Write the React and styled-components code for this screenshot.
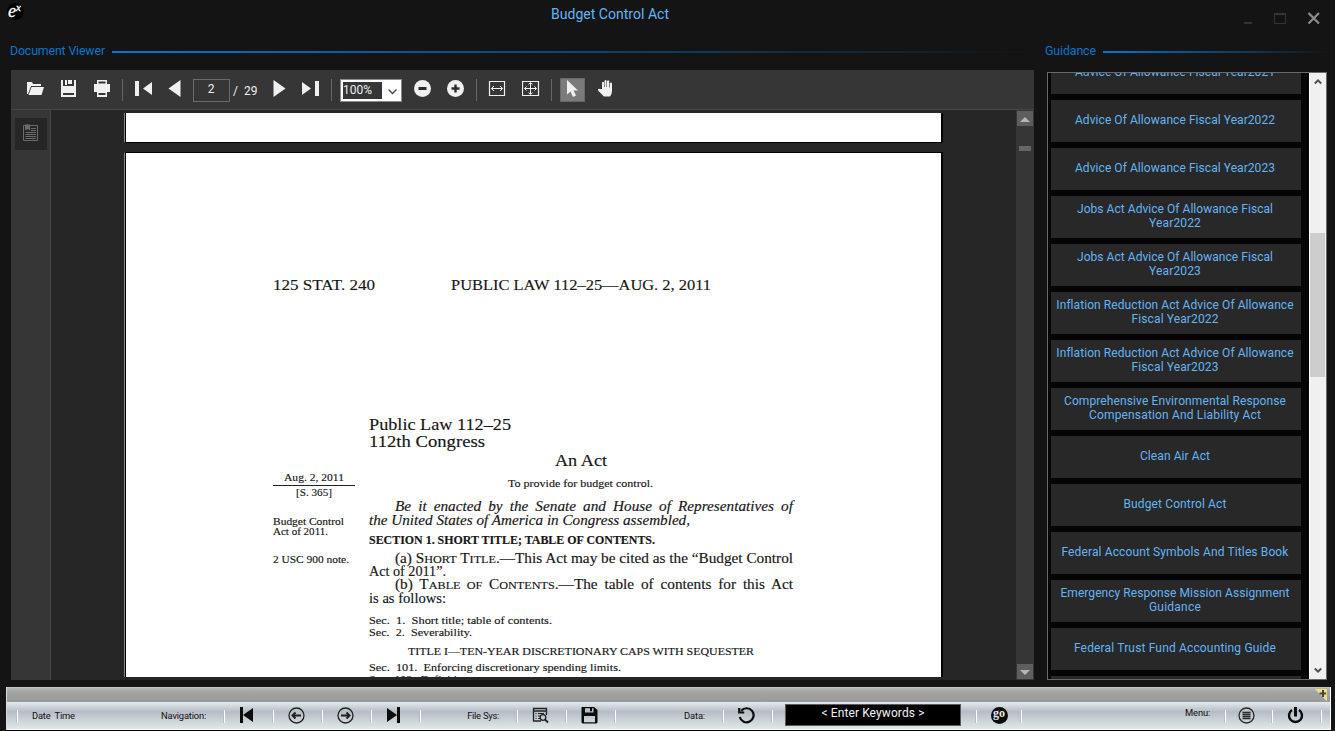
import React, { useLayoutEffect, useRef } from 'react';
import styled, { createGlobalStyle } from 'styled-components';

const Global = createGlobalStyle`
  * { box-sizing: border-box; }
  body { margin: 0; background: #141414; overflow: hidden; font-family: Roboto, sans-serif; }
`;

const ui = 'Roboto, sans-serif';
const book = '"Century Schoolbook", C059, "Liberation Serif", serif';

const Window = styled.div`
  width: 1335px; height: 731px; background: #141414; overflow: hidden;
  display: flex; flex-direction: column; font-family: ${ui};
`;
const TitleBar = styled.header`
  height: 40px; display: flex; align-items: flex-start; padding: 3px 14px 0 7px;
`;
const Logo = styled.div`
  width: 17px; height: 17px; border-radius: 50%; background: #000; color: #fff;
  font: italic 18px/17px "Liberation Serif", serif; padding-left: 1px; display: flex;
  -webkit-text-stroke: 0.3px #fff;
  & > sup { font-size: 11px; line-height: 8px; }
`;
const Title = styled.h1`
  margin: 0 0 0 527px; font-size: 14px; font-weight: 400; line-height: 22px; color: #64b4f4;
`;
const WindowButtons = styled.div`
  margin-left: auto; display: flex; padding-top: 8px; gap: 21px;
`;
const Headings = styled.div`
  display: grid; grid-template-columns: 1035px 1fr; height: 22px; padding-left: 10px;
`;
const Heading = styled.h2`
  margin: 0; display: flex; align-items: center; gap: 7px; font-size: 12.4px; font-weight: 400; color: #0a76cf;
  & > span { margin-bottom: 1px; }
  &::after { content: ''; flex: 1; height: 2px; margin-top: 2px; margin-right: ${p => p.$end}px;
    background: linear-gradient(90deg, #0078d7, #141414); }
`;
const Main = styled.main`
  display: flex; height: 610px; margin-top: 8px; padding-left: 11px;
`;
const Viewer = styled.section`
  width: 1023px; height: 610px; display: flex; flex-direction: column; background: #262626;
`;
const Toolbar = styled.div`
  height: 40px; background: #363636; border-bottom: 1px solid #474747; display: flex; align-items: center;
`;
const Tool = styled.span`
  display: flex; margin-left: ${p => p.$ml}px; margin-bottom: 3px;
`;
const Divider = styled.i`
  width: 1px; height: 22px; margin-left: ${p => p.$ml}px; background: #666;
`;
const PageBox = styled.div`
  width: 37px; height: 23px; margin: 2px 0 0 9px; border: 1px solid #6a6a6a; color: #eee;
  font-size: 12px; line-height: 18px; text-align: center; padding-right: 1px;
`;
const PageTotal = styled.span`
  width: 25px; margin: 2px 0 0 3px; color: #eee; font-size: 12px; display: flex; gap: 6px;
`;
const Zoom = styled.div`
  width: 62px; height: 23px; margin: 2px 0 0 8px; border: 1px solid #8a8a8a; background: #fff; padding: 2px;
  display: flex; align-items: center; justify-content: space-between;
  & > b { width: 39px; height: 17px; background: #363636; color: #eee; font-weight: 400; font-size: 12px; line-height: 16px; }
  & > svg { margin: 2px 2px 0 0; }
`;
const PointerTool = styled.div`
  width: 25px; height: 24px; margin-left: 8px; background: #7b7b7b; border: 1px solid #686868; padding: 1px 0 0 5px;
`;
const ViewerBody = styled.div`
  flex: 1; display: flex; min-height: 0;
`;
const SideStrip = styled.aside`
  width: 40px; background: #363636; border-right: 1px solid #474747; padding: 8px 0 0 4px;
`;
const BookmarkButton = styled.div`
  width: 32px; height: 32px; background: #262626; padding: 6px 0 0 8px;
`;
const Canvas = styled.div`
  flex: 1; padding: 3px 0 3px 73px; display: flex; flex-direction: column; gap: 9px;
`;
const Sheet = styled.article`
  width: 819px; background: #fff; color: #161616; overflow: hidden;
  border-left: 1px solid #888; border-right: 2px solid #000;
  box-shadow: inset 1px 0 #000; padding-left: 148px;
  ${p => p.$tail
    ? 'height: 30px; border-bottom: 1px solid #000;'
    : 'height: 525px; border-top: 1px solid #000;'}
`;
const DocScroll = styled.div`
  width: 18px; background: #363636; padding: 1px; display: flex; flex-direction: column; align-items: center;
`;
const ScrollArrow = styled.div`
  width: 16px; height: 15px; background: #5e5e5e; display: grid; place-items: center;
`;
const DocThumb = styled.div`
  width: 12px; height: 5px; margin: 20px 0 auto; background: #666;
`;
const Columns = styled.div`
  display: grid; grid-template-columns: 96px 424px; font-family: ${book};
`;
const Column = styled.div` min-width: 0; `;
const Line = styled.div`
  height: ${p => p.$step}px; padding-left: ${p => p.$indent || 0}px; display: flex; align-items: flex-end;
  font-size: ${p => p.$size}px; font-family: ${book};
  font-style: ${p => (p.$italic ? 'italic' : 'normal')}; font-weight: ${p => (p.$bold ? 700 : 400)};
`;
const STRETCH = 1.09;
const LineText = styled.span`
  white-space: ${p => (p.$justify ? 'normal' : 'pre')}; line-height: 1; margin-bottom: -0.1625em; flex: none;
  height: 1em; -webkit-text-stroke: 0.15px #161616; transform-origin: 0 0;
  ${p => p.$justify && `width: ${p.$justify / STRETCH}px; text-align-last: justify; transform: scaleX(${STRETCH});`}
`;
const Caps = styled.span` font-size: 0.8em; `;
const Rule = styled.hr` width: 82px; height: 1px; border: 0; margin: 4px 0 0; background: #222; `;

const Guidance = styled.section`
  width: 280px; height: 608px; margin: 2px 0 0 13px; border: 1px solid #696969; background: #050505;
  display: flex; overflow: hidden;
`;
const List = styled.div`
  width: 261px; padding-left: 3px; display: flex; flex-direction: column; gap: 6px; margin-top: -21px;
`;
const Entry = styled.div`
  width: 250px; height: 42px; flex: none; background: #282828; color: #64b4f4; font-size: 12px; line-height: 14px;
  display: flex; flex-direction: column; align-items: center; justify-content: center; padding: 0 2px 2px 0;
  white-space: nowrap;
`;
const ListScroll = styled.div`
  width: 17px; height: 606px; background: #f0f0f0; border-left: 1px solid #fff; display: flex; flex-direction: column;
  align-items: center; padding: 5px 1px 5px 0;
`;
const ListThumb = styled.div` width: 15px; height: 144px; background: #cdcdcd; margin: 147px 0 auto; `;

const Footer = styled.footer`
  width: 1325px; height: 43px; margin: 7px 0 0 6px; border-left: 1px solid #d7dcdf; border-right: 1px solid #fff;
  display: flex; flex-direction: column; box-shadow: 0 1px #000;
`;
const Grip = styled.div`
  height: 15px; background: linear-gradient(#b4b6b5, #a2a4a2 30%, #999b99); border-top: 1px solid #c2c5c5;
  display: flex; justify-content: flex-end; padding-right: 2px;
`;
const Strip = styled.div`
  height: 28px; display: flex; border-bottom: 1px solid #fff;
  background: linear-gradient(#e2ebed 0%, #b5bcc6 36%, #c5ccd2 58%, #e0e8e9 100%);
`;
const Cell = styled.div`
  width: ${p => p.$w}px; display: flex; align-items: center; justify-content: ${p => p.$just || 'center'};
  padding: 0 ${p => p.$pr ?? 5}px 1px ${p => p.$pl || 0}px; flex: none; color: #111; font-size: 9.4px;
  background: linear-gradient(#bdbcbb, #bdbcbb) right 1px top 8px / 1px 13px no-repeat,
    linear-gradient(#fff, #fff) right 0 top 8px / 1px 13px no-repeat;
`;
const Keywords = styled.div`
  width: 176px; height: 22px; margin-bottom: 1px; border: 1px solid #5a5a5a; background: #000; color: #f2f2f2;
  font-size: 12px; line-height: 17px; text-align: center;
`;
const Go = styled.div`
  width: 17px; height: 17px; border-radius: 50%; background: #0b0b0b; color: #e8e8e8;
  font: bold 12px/12px "Liberation Serif", serif; text-align: center;
`;
const Label = styled.span` white-space: pre; margin: 0 0 ${p => p.$lift || 0}px; `;

/* Tracks its text so that it takes exactly `w` pixels; with `stretch` the glyphs widen instead. */
function Fit({ w, stretch, children, as: Tag = 'span', ...rest }) {
  const ref = useRef(null);
  useLayoutEffect(() => {
    const el = ref.current;
    el.style.letterSpacing = '0px';
    if (stretch) el.style.transform = 'none';
    const natural = el.getBoundingClientRect().width;
    if (stretch) el.style.transform = `scaleX(${w / natural})`;
    else el.style.letterSpacing = `${(w - natural) / (el.textContent.length - 0.5)}px`;
  }, [w, stretch]);
  return <Tag ref={ref} {...rest}>{children}</Tag>;
}
function Text({ w, step, size, indent, italic, bold, justify, children }) {
  return (
    <Line $step={step} $size={size} $indent={indent} $italic={italic} $bold={bold}>
      {justify ? <LineText $justify={w}>{children}</LineText> : <Fit as={LineText} w={w} stretch>{children}</Fit>}
    </Line>
  );
}
function Icon({ s = 18, vb = 18, fill = '#f0f0f0', ...p }) {
  return <svg width={s} height={s} viewBox={`0 0 ${vb} ${vb}`} fill={fill} {...p} />;
}

const entries = [
  [['Advice Of Allowance Fiscal Year2021', 200]],
  [['Advice Of Allowance Fiscal Year2022', 200]],
  [['Advice Of Allowance Fiscal Year2023', 200]],
  [['Jobs Act Advice Of Allowance Fiscal', 196], ['Year2022', 52]],
  [['Jobs Act Advice Of Allowance Fiscal', 196], ['Year2023', 52]],
  [['Inflation Reduction Act Advice Of Allowance', 237], ['Fiscal Year2022', 87]],
  [['Inflation Reduction Act Advice Of Allowance', 237], ['Fiscal Year2023', 87]],
  [['Comprehensive Environmental Response', 222], ['Compensation And Liability Act', 172]],
  [['Clean Air Act', 70]],
  [['Budget Control Act', 103]],
  [['Federal Account Symbols And Titles Book', 227]],
  [['Emergency Response Mission Assignment', 229], ['Guidance', 52]],
  [['Federal Trust Fund Accounting Guide', 202]],
  [['', 0]],
];

const Tools = () => (
  <Toolbar>
    <Tool $ml={15}><Icon><path d="M1 15V3h5l1 2h8v2H5L2 15ZM5.500 8H18l-2.500 8H2.500Z" /></Icon></Tool>
    <Tool $ml={16}><Icon><path fillRule="evenodd" d="M1 1h2v8h11V1h2v17H1ZM3 14v2h11v-2Z" /><path d="M5 1h2v5H5ZM8 1h4v4H8ZM3 7h11v3H3Z" /></Icon></Tool>
    <Tool $ml={15}><Icon><path fillRule="evenodd" d="M4 1h10v4h3v8h-3v5H4v-5H1V5h3ZM5.500 2.500v2h7v-2ZM5.500 14v2h7v-2Z" /></Icon></Tool>
    <Divider $ml={11} />
    <Tool $ml={12}><Icon><path d="M0 2h4v15H0ZM17 3v13L8 9.500Z" /></Icon></Tool>
    <Tool $ml={13}><Icon><path d="M14.500 1v17L2.500 9.500Z" /></Icon></Tool>
    <PageBox>2</PageBox>
    <PageTotal><span>/</span><span>29</span></PageTotal>
    <Tool $ml={12}><Icon><path d="M3.500 1v17l12-8.500Z" /></Icon></Tool>
    <Tool $ml={14}><Icon><path d="M0 3v13l9-6.500ZM13 2h4v15h-4Z" /></Icon></Tool>
    <Divider $ml={11} />
    <Zoom><b>100%</b><Icon s={9} vb={9} fill="none" stroke="#444" strokeWidth="1.300"><path d="m.5 2.500 4 4 4-4" /></Icon></Zoom>
    <Tool $ml={12}><Icon><circle cx="8.500" cy="9.500" r="8.500" /><path d="M4.500 8h8v3h-8Z" fill="#2a2a2a" /></Icon></Tool>
    <Tool $ml={15}><Icon><circle cx="8.500" cy="9.500" r="8.500" /><path d="M4.500 8.300h2.800V5.500h2.400v2.800h2.800v2.400H9.700v2.800H7.300v-2.800H4.500Z" fill="#2a2a2a" /></Icon></Tool>
    <Divider $ml={11} />
    <Tool $ml={11}><Icon fill="none" stroke="#f0f0f0"><path strokeWidth="1.200" d="M1.500 2.500h15v14h-15Z" /><path d="M3.500 9.500h11M6 7 3.500 9.500 6 12M12 7l2.500 2.500L12 12" /></Icon></Tool>
    <Tool $ml={16}><Icon fill="none" stroke="#f0f0f0"><path strokeWidth="1.200" d="M.5 2.500h16v14H.5Z" /><path d="M2.500 9.500h12M8.500 4v11M4.500 7.500l-2 2 2 2M12.500 7.500l2 2-2 2M6.500 5.500l2-2 2 2M6.500 13.500l2 2 2-2" /></Icon></Tool>
    <Divider $ml={11} />
    <PointerTool><Icon><path d="M1 0v14.500l3.500-3 2.500 5.500 3-1.500-2.500-5H12Z" /></Icon></PointerTool>
    <Tool $ml={12}><Icon><path d="M5 10V3.500q1-1.300 2 0V8h.5V1.800q1-1.500 2 0V8h.5V2q1.200-1.300 2.200 0v6.500h.6V4q1.200-1.200 2.200.2V12q0 3-2 5.500H7Q5 15.500.8 11.200q0-2 2.200-1.200Z" /></Icon></Tool>
  </Toolbar>
);

const Act = () => (
  <Sheet>
    <Columns>
      <Column>
        <Text step={137} size={15.5} w={102}>125 STAT. 240</Text>
        <Text step={191} size={11} indent={11} w={60}>Aug. 2, 2011</Text>
        <Rule />
        <Text step={10} size={11} indent={23} w={36}>[S. 365]</Text>
        <Text step={29} size={11} w={71}>Budget Control</Text>
        <Text step={10} size={11} w={55}>Act of 2011.</Text>
        <Text step={28} size={11} w={76}>2 USC 900 note.</Text>
      </Column>
      <Column>
        <Text step={137} size={15.5} indent={82} w={260}>PUBLIC LAW 112–25—AUG. 2, 2011</Text>
        <Text step={140} size={17} w={142}>Public Law 112–25</Text>
        <Text step={17} size={17} w={116}>112th Congress</Text>
        <Text step={19} size={17} indent={186} w={52}>An Act</Text>
        <Text step={21} size={11} indent={139} w={145}>To provide for budget control.</Text>
        <Text step={25} size={14} indent={26} w={398} italic justify>Be it enacted by the Senate and House of Representatives of</Text>
        <Text step={14} size={14} w={321} italic>the United States of America in Congress assembled,</Text>
        <Text step={19} size={11.5} w={286} bold>SECTION 1. SHORT TITLE; TABLE OF CONTENTS.</Text>
        <Text step={19} size={14} indent={26} w={398}>(a) S<Caps>HORT</Caps> T<Caps>ITLE</Caps>.—This Act may be cited as the “Budget Control</Text>
        <Text step={13} size={14} w={77}>Act of 2011”.</Text>
        <Text step={13} size={14} indent={26} w={398} justify>(b) T<Caps>ABLE OF</Caps> C<Caps>ONTENTS</Caps>.—The table of contents for this Act</Text>
        <Text step={14} size={14} w={77}>is as follows:</Text>
        <Text step={20} size={11} w={183}>Sec.  1.  Short title; table of contents.</Text>
        <Text step={12} size={11} w={103}>Sec.  2.  Severability.</Text>
        <Text step={19} size={11} indent={39} w={346}>TITLE I—TEN-YEAR DISCRETIONARY CAPS WITH SEQUESTER</Text>
        <Text step={16} size={11} w={252}>Sec.  101.  Enforcing discretionary spending limits.</Text>
        <Text step={12} size={11} w={107}>Sec.  102.  Definitions.</Text>
      </Column>
    </Columns>
  </Sheet>
);

const ink = '#0c0c0c';
const Bottom = () => (
  <Footer>
    <Grip>
      <svg width="13" height="14" viewBox="0 0 13 14"><path d="M0 1h12v12Z" fill="#f5df7a" /><path d="m0 1 12 12" stroke="#c6c9e0" /><path d="M8 2v7M4.500 5.500H11" stroke="#444" strokeWidth="2" /></svg>
    </Grip>
    <Strip>
      <Cell $w={11} />
      <Cell $w={207} $just="space-between" $pl={14} $pr={19}><Fit as={Label} w={43}>Date  Time</Fit><Fit w={45}>Navigation:</Fit></Cell>
      <Cell $w={49}><Icon s={16} vb={16} fill={ink}><path d="M1 0h3v16H1ZM14 1v14L4 8Z" /></Icon></Cell>
      <Cell $w={49}><Icon s={17} vb={17} fill="none" stroke="#222"><circle cx="8.500" cy="8.500" r="7.500" strokeWidth="1.300" /><path strokeWidth="2" d="M4.500 8.500H13M7.500 5.500l-3 3 3 3" /></Icon></Cell>
      <Cell $w={49}><Icon s={17} vb={17} fill="none" stroke="#222"><circle cx="8.500" cy="8.500" r="7.500" strokeWidth="1.300" /><path strokeWidth="2" d="M4 8.500h8.500M9.500 5.500l3 3-3 3" /></Icon></Cell>
      <Cell $w={49}><Icon s={16} vb={16} fill={ink}><path d="M1 1v14l10-7ZM11 0h3v16h-3Z" /></Icon></Cell>
      <Cell $w={97} $pr={19} $just="flex-end"><Fit w={32}>File Sys:</Fit></Cell>
      <Cell $w={49}><Icon s={17} vb={17} fill="none" stroke="#222"><path strokeWidth="1.300" d="M9 14H1.500V1.500h13V8M1.500 4h13" /><path strokeWidth="1.200" d="M3.500 6.500h1M6 6.500h6M3.500 9h1M6 9h2M3.500 11.500h1M6 11.500h2" /><circle cx="11" cy="10.500" r="2.800" strokeWidth="1.300" /><path strokeWidth="1.800" d="m13 12.500 3 3" /></Icon></Cell>
      <Cell $w={49}><Icon s={17} vb={17} fill={ink}><path fillRule="evenodd" d="M1 0h12l3.500 3v12.500l-1 1H1.500l-1-1V.5ZM4 1.200V5.500h8.500V1.200H11v3H9v-3ZM3 9v6.200h11V9Z" /></Icon></Cell>
      <Cell $w={108} $pr={19} $just="flex-end"><Fit w={21}>Data:</Fit></Cell>
      <Cell $w={49}><Icon s={17} vb={17} fill="none" stroke={ink}><path strokeWidth="2.200" d="M3.200 3.800A7 7 0 1 1 1.800 10M1.200 1v4.500h5" /></Icon></Cell>
      <Cell $w={204} $just="flex-start" $pl={12}><Keywords><Fit w={103}>&lt; Enter Keywords &gt;</Fit></Keywords></Cell>
      <Cell $w={45} $pr={1}><Go>go</Go></Cell>
      <Cell $w={204} $pr={16} $just="flex-end"><Fit as={Label} $lift={5} w={25}>Menu:</Fit></Cell>
      <Cell $w={47} $pr={7}><Icon s={17} vb={17} fill="none" stroke="#2a2a2a"><circle cx="8.500" cy="8.500" r="7.500" strokeWidth="1.300" /><path strokeWidth="1.300" d="M4.500 5.500h8M4.500 7.500h8M4.500 9.500h8M4.500 11.500h8" /></Icon></Cell>
      <Cell $w={49}><Icon s={17} vb={17} fill="none" stroke={ink}><path strokeWidth="2.400" d="M5 3A6.500 6.500 0 1 0 12 3" /><path strokeWidth="3" d="M8.500 0v9.500" /></Icon></Cell>
    </Strip>
  </Footer>
);

export default function App() {
  return (
    <Window>
      <Global />
      <TitleBar>
        <Logo>e<sup>x</sup></Logo>
        <Title><Fit w={118}>Budget Control Act</Fit></Title>
        <WindowButtons>
          <svg width="9" height="14" viewBox="0 0 9 14"><path d="M0 11h8v2H0Z" fill="#343434" /></svg>
          <svg width="12" height="14" viewBox="0 0 12 14"><path d="M.5 2.500h11v10H.5Z" fill="none" stroke="#343434" /><path d="M0 2h12v2H0Z" fill="#343434" /></svg>
          <svg width="14" height="15" viewBox="0 0 14 15"><path d="m1.500 2 10.500 10.500M12 2 1.500 12.500" stroke="#8c8c8c" strokeWidth="2.200" /></svg>
        </WindowButtons>
      </TitleBar>
      <Headings>
        <Heading $end={10}><Fit w={95}>Document Viewer</Fit></Heading>
        <Heading $end={4}><Fit w={51}>Guidance</Fit></Heading>
      </Headings>
      <Main>
        <Viewer>
          <Tools />
          <ViewerBody>
            <SideStrip>
              <BookmarkButton>
                <Icon fill="none" stroke="#6a6a6a"><path d="M.5 1.500h14v15H.5Z" /><path d="M2 .5h5v6L4.500 5 2 6.500Z" fill="#6a6a6a" stroke="none" /><path d="M8 4.500h5M8 6.500h5M2.500 8.500H13M2.500 10.500H13M2.500 12.500H13M2.500 14.500H13" /></Icon>
              </BookmarkButton>
            </SideStrip>
            <Canvas>
              <Sheet $tail />
              <Act />
            </Canvas>
            <DocScroll>
              <ScrollArrow><Icon s={10} vb={10} fill="#b5b5b5"><path d="m0 8 5-5 5 5Z" /></Icon></ScrollArrow>
              <DocThumb />
              <ScrollArrow><Icon s={10} vb={10} fill="#b5b5b5"><path d="m0 3 5 5 5-5Z" /></Icon></ScrollArrow>
            </DocScroll>
          </ViewerBody>
        </Viewer>
        <Guidance>
          <List>
            {entries.map((lines, i) => (
              <Entry key={i}>{lines.map(([t, w]) => t && <Fit key={t} w={w}>{t}</Fit>)}</Entry>
            ))}
          </List>
          <ListScroll>
            <Icon s={8} vb={8} fill="none" stroke="#505050" strokeWidth="2"><path d="M.8 5.500 4 2.300l3.200 3.200" /></Icon>
            <ListThumb />
            <Icon s={8} vb={8} fill="none" stroke="#505050" strokeWidth="2"><path d="M.8 2.500 4 5.700l3.200-3.200" /></Icon>
          </ListScroll>
        </Guidance>
      </Main>
      <Bottom />
    </Window>
  );
}
